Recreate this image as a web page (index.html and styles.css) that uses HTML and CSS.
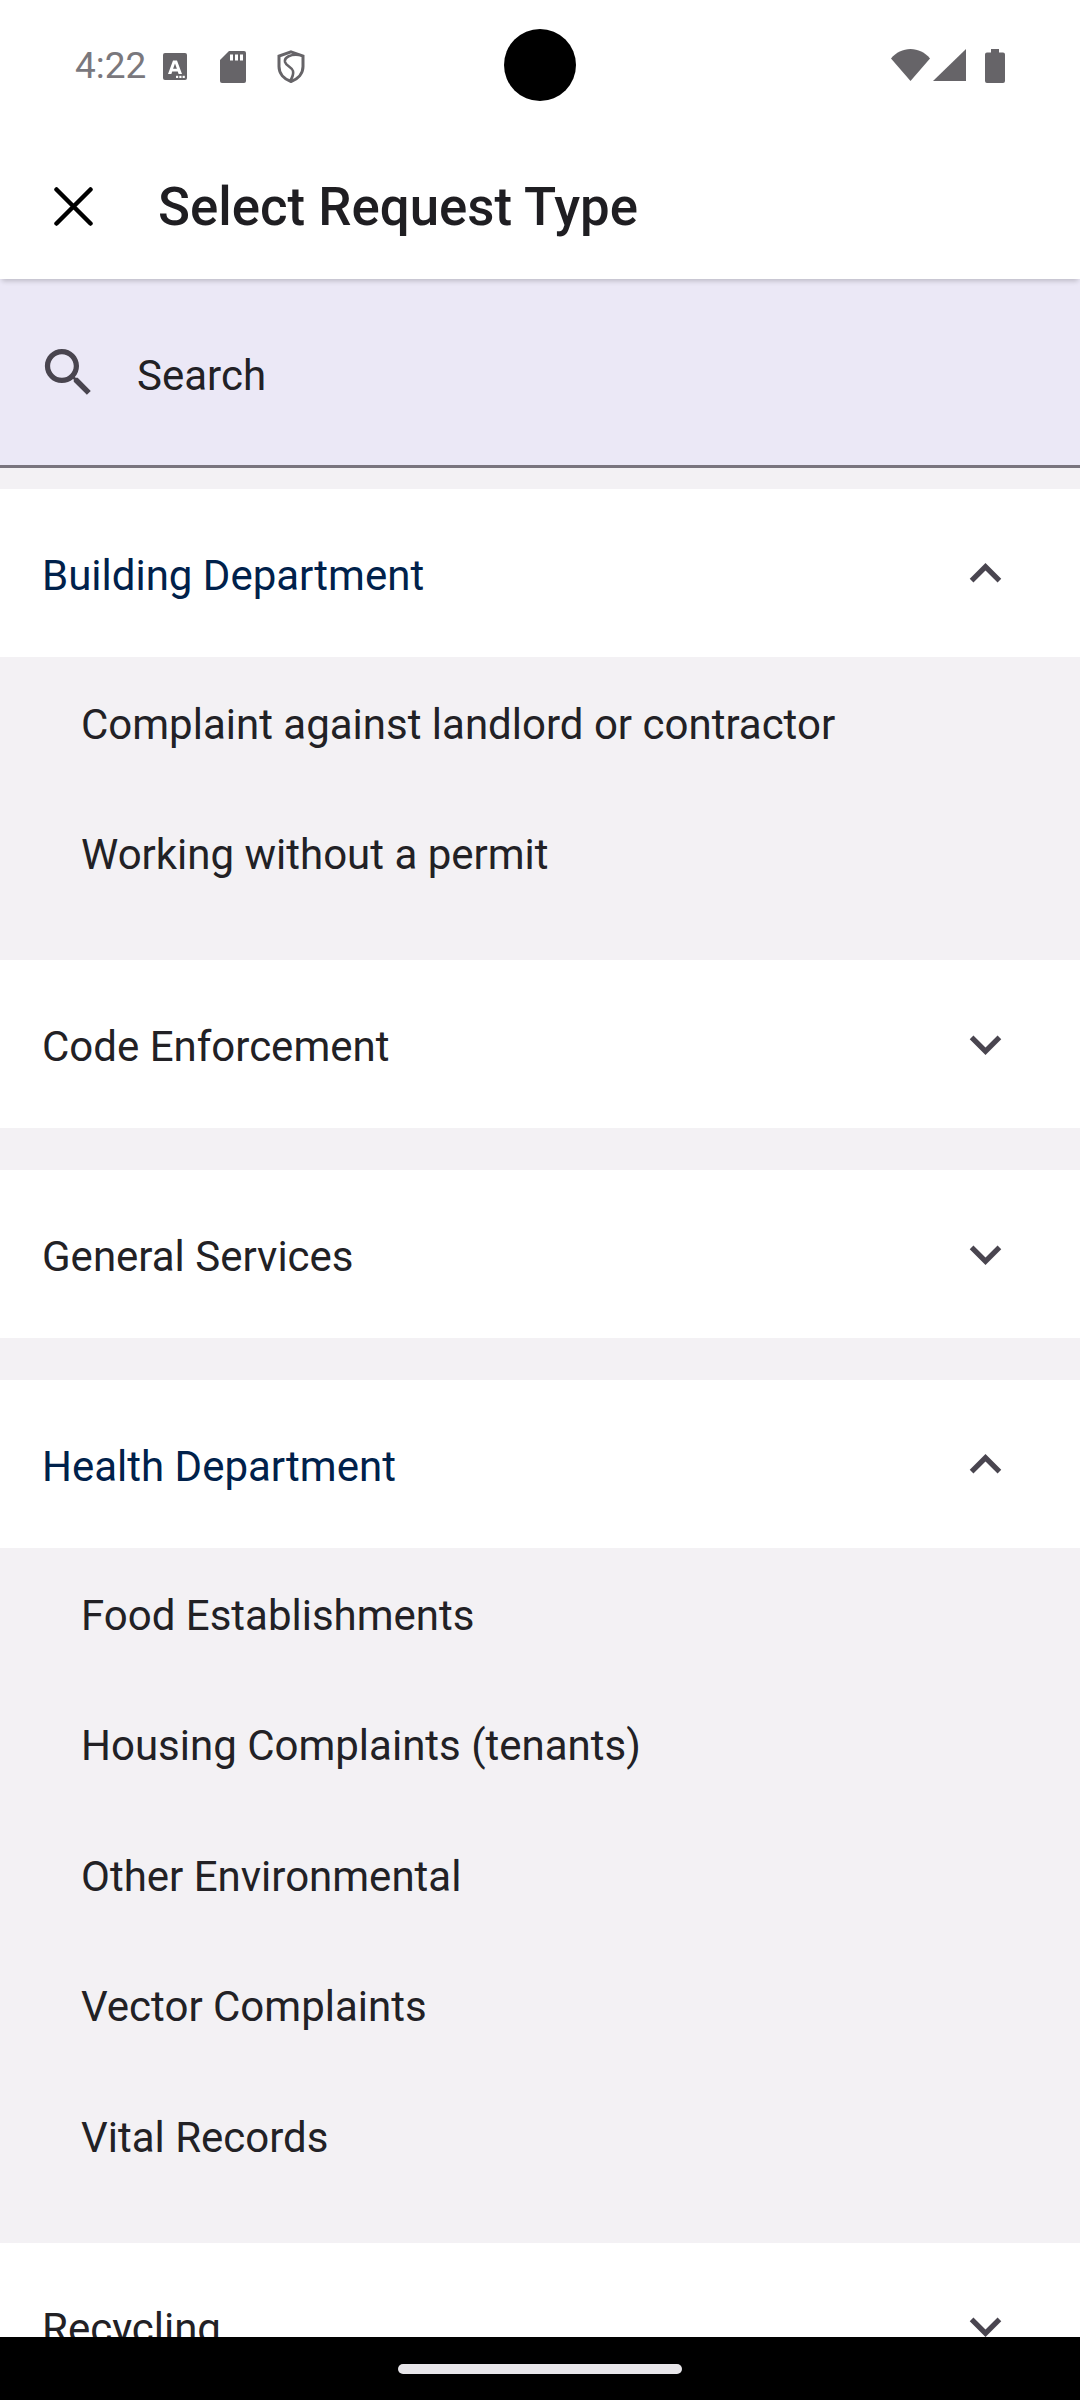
FILE: index.html
```html
<!DOCTYPE html>
<html lang="en">
<head>
<meta charset="utf-8">
<title>Select Request Type</title>
<link rel="stylesheet" href="styles.css">
</head>
<body>
<div class="screen">
  <div class="camera"></div>
  <header class="status">
    <div class="status-left">
      <span class="time">4:22</span>
      <svg class="ic-a" viewBox="0 0 24 27"><rect width="24" height="27" rx="2" fill="#666468"/><path fill-rule="evenodd" d="M5 21 10 7.500h4L19 21h-3.400l-.8-2.600H9.200L8.400 21zM10.100 15.800h3.800L12 10.500z" fill="#fff"/><rect x="13" y="22.800" width="2.200" height="2.200" fill="#fff"/><rect x="16.300" y="22.800" width="2.200" height="2.200" fill="#fff"/><rect x="19.600" y="22.800" width="2.200" height="2.200" fill="#fff"/></svg>
      <svg class="ic-sd" viewBox="0 0 26 32"><path d="M9 0h15a2 2 0 0 1 2 2v28a2 2 0 0 1-2 2H2a2 2 0 0 1-2-2V9z" fill="#666468"/><rect x="10" y="3.500" width="3" height="6" fill="#fff"/><rect x="15" y="3.500" width="3" height="6" fill="#fff"/><rect x="20" y="3.500" width="3" height="6" fill="#fff"/></svg>
      <svg class="ic-shield" viewBox="0 0 28 33"><path d="M14 1.800 26 6v10.500c0 7-5 12.500-12 15-7-2.500-12-8-12-15V6z" fill="none" stroke="#666468" stroke-width="3"/><path d="M22 5C14 4 7 7 8 12 9 16 15 17 16 21 17 25 15 28 13 31" fill="none" stroke="#666468" stroke-width="2.600"/></svg>
    </div>
    <div class="status-right">
      <svg class="ic-wifi" viewBox="0 0 39 32"><path d="M0 9.500C5 3.500 12 0 19.500 0S34 3.500 39 9.500L19.500 32z" fill="#666468"/></svg>
      <svg class="ic-signal" viewBox="0 0 33 32"><path d="M33 0v32H0z" fill="#666468"/></svg>
      <svg class="ic-batt" viewBox="0 0 20 34"><path d="M6 0h8v3.500h4a2 2 0 0 1 2 2V32a2 2 0 0 1-2 2H2a2 2 0 0 1-2-2V5.500a2 2 0 0 1 2-2h4z" fill="#666468"/></svg>
    </div>
  </header>
  <div class="appbar">
    <svg class="ic-close" viewBox="0 0 39 39"><path d="M2.500 2.500 36.500 36.500M36.500 2.500 2.500 36.500" stroke="#000" stroke-width="4.500" stroke-linecap="round" fill="none"/></svg>
    <h1 class="title">Select Request Type</h1>
  </div>
  <div class="search">
    <svg class="ic-search" viewBox="0 0 24 24"><path d="M15.500 14h-.79l-.28-.27C15.410 12.590 16 11.110 16 9.500 16 5.910 13.090 3 9.500 3S3 5.910 3 9.500 5.910 16 9.500 16c1.610 0 3.090-.59 4.230-1.570l.27.28v.79l5 4.990L20.490 19l-4.990-5zm-6 0C7.010 14 5 11.990 5 9.500S7.010 5 9.500 5 14 7.010 14 9.500 11.990 14 9.500 14z" fill="#49454f"/></svg>
    <span class="search-label">Search</span>
  </div>
  <main class="list">
    <section class="group open">
      <div class="head"><span class="label">Building Department</span><svg class="chev" viewBox="0 0 24 24"><path d="M12 8l-6 6 1.410 1.410L12 10.830l4.590 4.580L18 14z"/></svg></div>
      <div class="panel">
        <div class="item">Complaint against landlord or contractor</div>
        <div class="item">Working without a permit</div>
      </div>
    </section>
    <section class="group">
      <div class="head"><span class="label">Code Enforcement</span><svg class="chev" viewBox="0 0 24 24"><path d="M16.590 8.590 12 13.170 7.410 8.590 6 10l6 6 6-6z"/></svg></div>
    </section>
    <section class="group">
      <div class="head"><span class="label">General Services</span><svg class="chev" viewBox="0 0 24 24"><path d="M16.590 8.590 12 13.170 7.410 8.590 6 10l6 6 6-6z"/></svg></div>
    </section>
    <section class="group open">
      <div class="head"><span class="label">Health Department</span><svg class="chev" viewBox="0 0 24 24"><path d="M12 8l-6 6 1.410 1.410L12 10.830l4.590 4.580L18 14z"/></svg></div>
      <div class="panel">
        <div class="item">Food Establishments</div>
        <div class="item">Housing Complaints (tenants)</div>
        <div class="item">Other Environmental</div>
        <div class="item">Vector Complaints</div>
        <div class="item">Vital Records</div>
      </div>
    </section>
    <section class="group">
      <div class="head"><span class="label">Recycling</span><svg class="chev" viewBox="0 0 24 24"><path d="M16.590 8.590 12 13.170 7.410 8.590 6 10l6 6 6-6z"/></svg></div>
    </section>
  </main>
  <footer class="nav"><div class="handle"></div></footer>
</div>
</body>
</html>
```
FILE: styles.css
```css
* { box-sizing: border-box; }
html, body { margin: 0; padding: 0; }
body { width: 1080px; height: 2400px; overflow: hidden; background: #fff; font-family: Roboto, "Noto Sans", sans-serif; color: #222125; }
.screen { position: relative; width: 1080px; height: 2400px; display: flex; flex-direction: column; }
.camera { position: absolute; left: 504px; top: 29px; width: 72px; height: 72px; border-radius: 50%; background: #000; }
.status { height: 130px; flex: none; display: flex; justify-content: space-between; padding: 49px 75px 0 75px; }
.status-left { display: flex; align-items: flex-start; }
.status-right { display: flex; align-items: flex-start; }
.time { font-size: 37px; line-height: 32px; font-weight: 400; color: #7a787d; margin-top: 1px; width: 88px; }
.ic-a { width: 24px; height: 27px; margin-top: 4px; }
.ic-sd { width: 26px; height: 32px; margin-left: 33px; margin-top: 2px; }
.ic-shield { width: 28px; height: 33px; margin-left: 31px; margin-top: 1px; }
.ic-wifi { width: 39px; height: 32px; }
.ic-signal { width: 33px; height: 32px; margin-left: 3px; }
.ic-batt { width: 20px; height: 34px; margin-left: 19px; }
.appbar { height: 149px; flex: none; display: flex; align-items: center; position: relative; z-index: 2; background: #fff; box-shadow: 0 4px 5px -2px rgba(0,0,0,.2); padding-left: 54px; padding-top: 3px; }
.ic-close { width: 39px; height: 39px; flex: none; }
.title { margin: 2px 0 0 65px; font-size: 52.800px; font-weight: 500; line-height: 60px; color: #1f1e22; }
.search { height: 189px; flex: none; display: flex; align-items: center; background: #ebe8f6; border-bottom: 3px solid #79747e; padding: 0 0 0 37px; }
.ic-search { width: 63px; height: 63px; flex: none; }
.search-label { font-size: 42px; line-height: 48px; margin-left: 37px; margin-top: 7px; color: #222125; }
.list { flex: 1; min-height: 0; overflow: hidden; background: #f3f1f4; padding-top: 21px; }
.head { height: 168px; display: flex; align-items: center; justify-content: space-between; background: #fff; padding: 0 63px 0 42px; font-size: 42px; color: #222125; }
.label { margin-top: 4px; }
.open .head { color: #00214b; }
.group { padding-bottom: 42px; }
.chev { width: 63px; height: 63px; fill: #49454f; flex: none; }
.item { height: 130.500px; display: flex; align-items: center; padding-left: 81px; padding-top: 4px; font-size: 42px; color: #222125; }
.nav { height: 63px; flex: none; background: #000; display: flex; justify-content: center; padding-top: 27px; }
.handle { width: 284px; height: 10px; border-radius: 5px; background: #e8e6ea; }
```
